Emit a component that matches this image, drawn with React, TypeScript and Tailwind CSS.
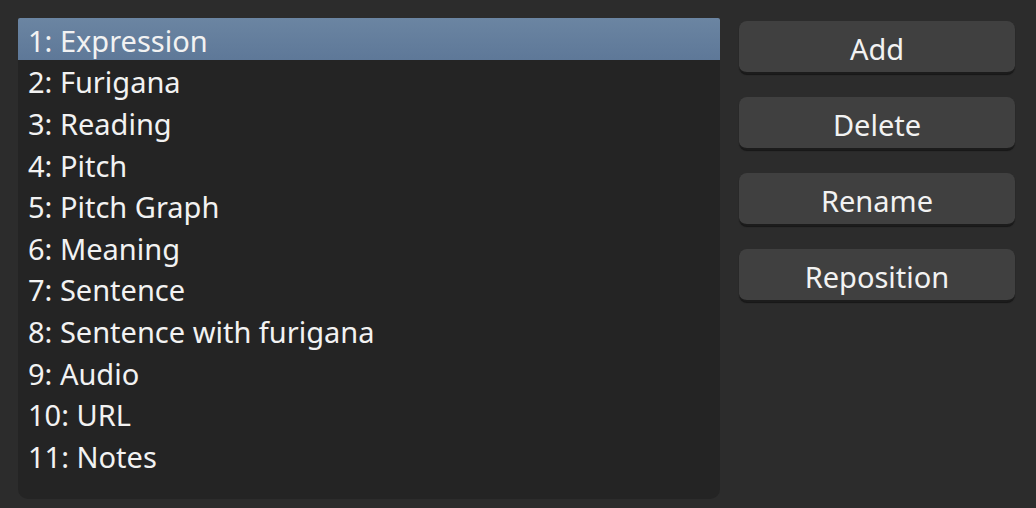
import React from "react";

const items = [
  "1: Expression",
  "2: Furigana",
  "3: Reading",
  "4: Pitch",
  "5: Pitch Graph",
  "6: Meaning",
  "7: Sentence",
  "8: Sentence with furigana",
  "9: Audio",
  "10: URL",
  "11: Notes",
];

const buttons = ["Add", "Delete", "Rename", "Reposition"];

export default function App() {
  return (
    <div
      className="w-[1036px] h-[508px] bg-[#2c2c2c] flex gap-[19px] pl-[18px] pt-[18px] pb-[9px] pr-[21px] text-[#f2f2f2]"
      style={{ fontFamily: '"Noto Sans", "Open Sans", sans-serif' }}
    >
      <div className="w-[702px] h-[481px] bg-[#242424] rounded-b-[10px] rounded-t-[2px] overflow-hidden flex flex-col">
        {items.map((t, i) => (
          <div
            key={t}
            className={
              "h-[41.6px] shrink-0 flex items-center pl-[10px] pt-[3px] text-[29px] leading-none " +
              (i === 0 ? "bg-gradient-to-b from-[#6b85a2] to-[#5e7898]" : "")
            }
          >
            {t}
          </div>
        ))}
      </div>
      <div className="flex-1 flex flex-col gap-[23px] pt-[3px]">
        {buttons.map((b) => (
          <div
            key={b}
            className="h-[53px] rounded-[8px] bg-[#404040] border-b-[2px] border-[#1c1c1c] shadow-[0_1px_1px_rgba(0,0,0,0.5)] flex items-center justify-center pt-[3px] text-[29px] leading-none"
          >
            {b}
          </div>
        ))}
      </div>
    </div>
  );
}
